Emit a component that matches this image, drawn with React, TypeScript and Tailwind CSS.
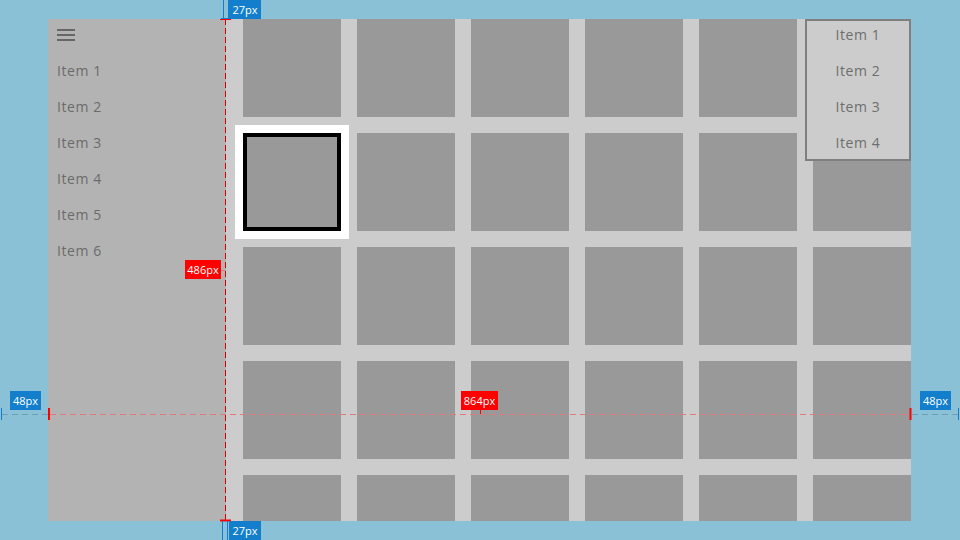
import React from "react";

const font = { fontFamily: '"Open Sans", "Noto Sans", sans-serif' };

function Label({ text, cls }: { text: string; cls: string }) {
  return (
    <div
      className={`absolute flex items-center justify-center text-[11px] leading-none text-white ${cls}`}
      style={font}
    >
      {text}
    </div>
  );
}

export default function App() {
  const sideItems = ["Item 1", "Item 2", "Item 3", "Item 4", "Item 5", "Item 6"];
  const menuItems = ["Item 1", "Item 2", "Item 3", "Item 4"];
  const tiles = Array.from({ length: 30 }, (_, i) => i);

  return (
    <div className="relative w-[960px] h-[540px] overflow-hidden bg-[#8bc1d6] pt-[19px] pl-[48px]" style={font}>
      {/* frame */}
      <div className="flex w-[863px] h-[502px] overflow-hidden">
        {/* sidebar */}
        <div className="w-[178px] shrink-0 bg-[#b3b3b3] pl-[9px]">
          <div className="-mt-[3px] flex flex-col">
            <div className="h-[36px] pt-[2px] flex items-center">
              <div className="flex flex-col gap-[3px]">
                <div className="w-[18px] h-[2px] bg-[#666666]" />
                <div className="w-[18px] h-[2px] bg-[#666666]" />
                <div className="w-[18px] h-[2px] bg-[#666666]" />
              </div>
            </div>
            {sideItems.map((t) => (
              <div key={t} className="h-[36px] flex items-center text-[14px] tracking-[0.6px] text-[#6b6b6b]">
                {t}
              </div>
            ))}
          </div>
        </div>
        {/* content */}
        <div className="flex-1 bg-[#cccccc] pl-[17px] overflow-hidden">
          <div className="grid grid-cols-[repeat(6,98px)] auto-rows-[98px] gap-[16px]">
            {tiles.map((i) =>
              i === 6 ? (
                <div key={i} className="bg-[#999999] border-4 border-black shadow-[0_0_0_8px_#ffffff]" />
              ) : (
                <div key={i} className="bg-[#999999]" />
              )
            )}
          </div>
        </div>
      </div>

      {/* dropdown menu */}
      <div className="absolute left-[805px] top-[19px] w-[106px] h-[142px] border-2 border-[#7f7f7f] bg-[#cccccc]">
        <div className="-mt-[5px] flex flex-col">
          {menuItems.map((t) => (
            <div key={t} className="h-[36px] flex items-center justify-center text-[14px] tracking-[0.6px] text-[#6e6e6e]">
              {t}
            </div>
          ))}
        </div>
      </div>

      {/* measurement overlay */}
      <svg className="absolute left-0 top-0 pointer-events-none" width="960" height="540">
        <line x1="225.5" y1="19" x2="225.5" y2="521" stroke="#d40000" strokeWidth="1" strokeDasharray="6 3" />
        {/* top marker */}
        <line x1="220" y1="19.5" x2="231" y2="19.5" stroke="#ff0000" strokeWidth="1" />
        <line x1="223.5" y1="0" x2="223.5" y2="19" stroke="#137fcc" strokeWidth="1" />
        <line x1="228.5" y1="0" x2="228.5" y2="19" stroke="#137fcc" strokeWidth="1" />
        <line x1="221" y1="18.5" x2="229" y2="18.5" stroke="#137fcc" strokeWidth="1" />
        {/* bottom marker */}
        <line x1="220" y1="520.5" x2="231" y2="520.5" stroke="#ff0000" strokeWidth="2" />
        <line x1="222.5" y1="521" x2="222.5" y2="540" stroke="#137fcc" strokeWidth="1" />
        <line x1="227.5" y1="521" x2="227.5" y2="540" stroke="#137fcc" strokeWidth="1" />
        {/* horizontal dashed */}
        <line x1="2" y1="414.5" x2="48" y2="414.5" stroke="#6d9fba" strokeWidth="1" strokeDasharray="6 4" />
        <line x1="50" y1="414.5" x2="910" y2="414.5" stroke="#e07a7a" strokeWidth="1" strokeDasharray="6 4" />
        <line x1="912" y1="414.5" x2="958" y2="414.5" stroke="#6d9fba" strokeWidth="1" strokeDasharray="6 4" />
        <line x1="1.5" y1="408" x2="1.5" y2="420" stroke="#137fcc" strokeWidth="1" />
        <line x1="958.5" y1="408" x2="958.5" y2="420" stroke="#137fcc" strokeWidth="1" />
        <line x1="49" y1="408" x2="49" y2="420" stroke="#ff0000" strokeWidth="2" />
        <line x1="910.5" y1="408" x2="910.5" y2="420" stroke="#ff0000" strokeWidth="2" />
        <line x1="480.5" y1="410" x2="480.5" y2="414" stroke="#ff0000" strokeWidth="1" />
        <line x1="221" y1="270.5" x2="225" y2="270.5" stroke="#e07a7a" strokeWidth="1" />
      </svg>

      <Label text="27px" cls="left-[229px] top-0 w-[32px] h-[19px] bg-[#137fcc]" />
      <Label text="27px" cls="left-[229px] top-[521px] w-[32px] h-[19px] bg-[#137fcc]" />
      <Label text="48px" cls="left-[10px] top-[391px] w-[31px] h-[19px] bg-[#137fcc]" />
      <Label text="48px" cls="left-[920px] top-[391px] w-[31px] h-[19px] bg-[#137fcc]" />
      <Label text="864px" cls="left-[461px] top-[391px] w-[37px] h-[19px] bg-[#ff0000]" />
      <Label text="486px" cls="left-[185px] top-[260px] w-[36px] h-[19px] bg-[#ff0000]" />
    </div>
  );
}
